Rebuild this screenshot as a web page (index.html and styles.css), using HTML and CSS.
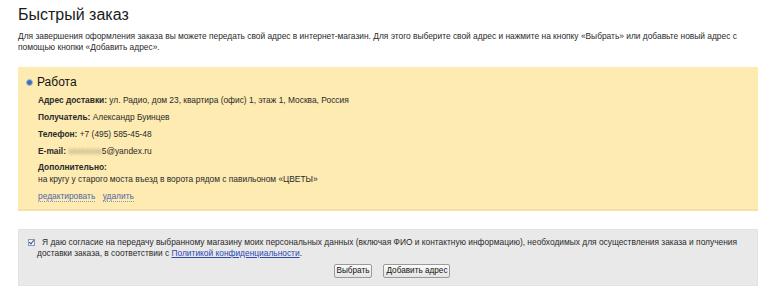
FILE: index.html
```html
<!DOCTYPE html>
<html lang="ru">
<head>
    <meta charset="UTF-8">
    <title>Быстрый заказ</title>
    <link rel="stylesheet" href="styles.css">
</head>
<body>
    <div class="page">
        <h1>Быстрый заказ</h1>
        <p class="intro">Для завершения оформления заказа вы можете передать свой адрес в интернет-магазин. Для этого выберите свой адрес и нажмите на кнопку «Выбрать» или добавьте новый адрес с помощью кнопки «Добавить адрес».</p>

        <div class="address">
            <label class="address-title">
                <span class="radio"></span>
                Работа
            </label>
            <div class="address-body">
                <p class="field"><b>Адрес доставки:</b> ул. Радио, дом 23, квартира (офис) 1, этаж 1, Москва, Россия</p>
                <p class="field"><b>Получатель:</b> Александр Буинцев</p>
                <p class="field"><b>Телефон:</b> +7 (495) 585-45-48</p>
                <p class="field"><b>E-mail:</b> <span class="blur">xxxxxxxx</span>5@yandex.ru</p>
                <p class="field extra"><b>Дополнительно:</b><br>на кругу у старого моста въезд в ворота рядом с павильоном «ЦВЕТЫ»</p>
                <div class="actions">
                    <a href="#">редактировать</a>
                    <a href="#">удалить</a>
                </div>
            </div>
        </div>

        <div class="agree">
            <p class="agree-text"><span class="check"></span>Я даю согласие на передачу выбранному магазину моих персональных данных (включая ФИО и контактную информацию), необходимых для осуществления заказа и получения доставки заказа, в соответствии с <a href="#">Политикой конфиденциальности</a>.</p>
            <div class="buttons">
                <button class="btn">Выбрать</button>
                <button class="btn">Добавить адрес</button>
            </div>
        </div>
    </div>
</body>
</html>
```

FILE: styles.css
```css
body {
    margin: 0;
    background: #fff;
    font-family: 'Liberation Sans', Arial, sans-serif;
    color: #2a2a2a;
}

.page {
    padding: 4px 12px 0 18px;
}

h1 {
    margin: 0;
    font-size: 16px;
    font-weight: normal;
    line-height: 22px;
    color: #1a1a1a;
}

.intro {
    margin: 5px 0 0;
    font-size: 8.4px;
    line-height: 11px;
}

.address {
    margin-top: 14px;
    background: #fdebb2;
    border-bottom: 2px solid #f6e0a8;
    padding: 7px 9px 7px;
}

.address-title {
    display: flex;
    align-items: center;
    font-size: 12px;
    line-height: 16px;
    color: #111;
}

.radio {
    width: 5px;
    height: 5px;
    border-radius: 50%;
    background: #3f6fb0;
    border: 1px solid #a9bedb;
    margin: 0 4px 0 -1px;
}

.address-body {
    padding-left: 11px;
    margin-top: 2px;
}

.field {
    margin: 0;
    font-size: 8.4px;
    line-height: 17px;
}

.field.extra {
    line-height: 12px;
    margin-top: 1px;
}

.blur {
    color: transparent;
    text-shadow: 0 0 3px rgba(70, 70, 70, 0.55);
}

.actions {
    margin-top: 5px;
    font-size: 8.4px;
    line-height: 12px;
}

.actions a {
    color: #4f67a8;
    text-decoration: none;
    border-bottom: 1px dotted #8595c0;
    margin-right: 5px;
}

.agree {
    margin-top: 18px;
    background: #e9e9e9;
    border: 1px solid #e3e3e3;
    padding: 7px 10px 7px 18px;
}

.agree-text {
    margin: 0;
    font-size: 8.4px;
    line-height: 11px;
}

.check {
    display: inline-block;
    width: 5px;
    height: 5px;
    border: 1px solid #8a98b8;
    background: #f4f6fb;
    margin: 0 7px 0 -9px;
    vertical-align: -1px;
    position: relative;
}

.check::after {
    content: '';
    position: absolute;
    left: 1px;
    top: -1px;
    width: 2px;
    height: 4px;
    border: solid #3a4f9c;
    border-width: 0 1px 1px 0;
    transform: rotate(40deg);
}

.agree-text a {
    color: #2b48b3;
}

.buttons {
    display: flex;
    justify-content: center;
    gap: 11px;
    margin-top: 5px;
}

.btn {
    font-family: 'Liberation Sans', Arial, sans-serif;
    font-size: 8.2px;
    line-height: 10px;
    padding: 1px 2px;
    background: linear-gradient(#fbfbfb, #e4e4e4);
    border: 1px solid #9a9a9a;
    border-radius: 2px;
    color: #111;
}
```
